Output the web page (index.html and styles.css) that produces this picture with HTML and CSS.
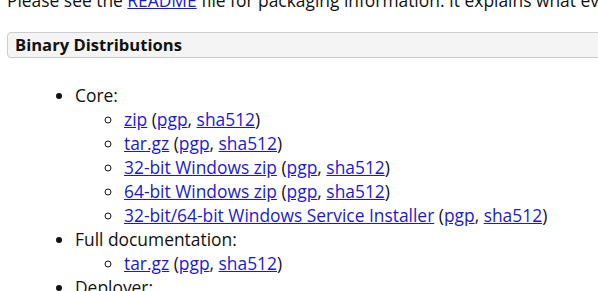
FILE: index.html
```html
<!DOCTYPE html>
<html>
<head>
<meta charset="utf-8">
<link rel="stylesheet" href="styles.css">
</head>
<body>
<div class="content">
  <p class="intro">Please see the <a href="#">README</a> file for packaging information. It explains what every distribution contains.</p>
  <h3 class="section-title">Binary Distributions</h3>
  <ul class="dist-list">
    <li>Core:
      <ul class="sub-list">
        <li><a href="#">zip</a> (<a href="#">pgp</a>, <a href="#">sha512</a>)</li>
        <li><a href="#">tar.gz</a> (<a href="#">pgp</a>, <a href="#">sha512</a>)</li>
        <li><a href="#">32-bit Windows zip</a> (<a href="#">pgp</a>, <a href="#">sha512</a>)</li>
        <li><a href="#">64-bit Windows zip</a> (<a href="#">pgp</a>, <a href="#">sha512</a>)</li>
        <li><a href="#">32-bit/64-bit Windows Service Installer</a> (<a href="#">pgp</a>, <a href="#">sha512</a>)</li>
      </ul>
    </li>
    <li>Full documentation:
      <ul class="sub-list">
        <li><a href="#">tar.gz</a> (<a href="#">pgp</a>, <a href="#">sha512</a>)</li>
      </ul>
    </li>
    <li>Deployer:
      <ul class="sub-list">
        <li><a href="#">zip</a> (<a href="#">pgp</a>, <a href="#">sha512</a>)</li>
      </ul>
    </li>
  </ul>
</div>
</body>
</html>
```
FILE: styles.css
```css
html, body {
  margin: 0;
  padding: 0;
  background: #ffffff;
  overflow: hidden;
}
body {
  font-family: "Open Sans", "DejaVu Sans", sans-serif;
  font-size: 17.4px;
  line-height: 24px;
  color: #111111;
}
.content {
  margin-top: -12px;
  padding-left: 7px;
  width: 700px;
}
a {
  color: #1a1ad6;
  text-decoration: underline;
}
.intro {
  margin: 0 0 20px 0;
  white-space: nowrap;
}
.section-title {
  margin: 0;
  padding: 0 7px;
  font-size: 16.6px;
  font-weight: bold;
  line-height: 24px;
  background: #f4f4f4;
  border: 1px solid #cccccc;
  border-radius: 4px;
}
.dist-list {
  margin: 25px 0 0 0;
  padding-left: 68px;
  list-style: disc;
}
.sub-list {
  margin: 0;
  padding-left: 49px;
  list-style: circle;
}
```
